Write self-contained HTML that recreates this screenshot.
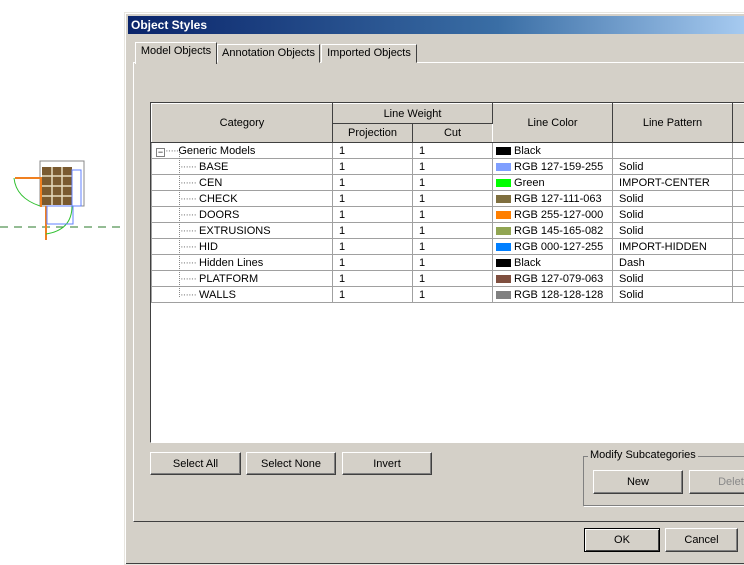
<!DOCTYPE html><html><head><style>
*{box-sizing:border-box;margin:0;padding:0}
body{width:744px;height:565px;background:#fff;position:relative;overflow:hidden;font-family:"Liberation Sans",sans-serif;font-size:11px;color:#000}
.abs{position:absolute}
.dlg{left:124px;top:12px;width:630px;height:553px;background:#d4d0c8;border:1px solid #e8e6e0;border-right:none;box-shadow:inset 1px 1px 0 #fff,inset -1px -1px 0 #404040}
.title{left:128px;top:16px;width:616px;height:18px;background:linear-gradient(90deg,#0a246a,#3a6ea5 60%,#a6caf0);color:#fff;font-weight:bold;font-size:12px;padding:1px 3px;line-height:16px}
.btn{position:absolute;background:#d4d0c8;border:1px solid;border-color:#fff #404040 #404040 #fff;box-shadow:inset -1px -1px 0 #808080;text-align:center;font-size:11px;line-height:22px}
.tab{position:absolute;top:44px;height:19px;border:1px solid;border-color:#fff #404040 transparent #fff;line-height:17px;font-size:11px;text-align:center;background:#d4d0c8}
table{border-collapse:collapse;font-size:11px}
td{border:1px solid #a0a0a0;height:16px;padding:1px 0 0 6px;line-height:14px;white-space:nowrap;overflow:hidden}
th{background:#d4d0c8;font-weight:normal;border:1px solid #808080;border-color:#fff #404040 #404040 #fff;font-size:11px}
.sw{display:inline-block;width:15px;height:8px;margin:0 3px -1px -3px}
.d{color:#888;letter-spacing:-1px}
</style></head><body>
<svg class="abs" style="left:0;top:150px" width="124" height="90">
<line x1="0" y1="77" x2="124" y2="77" stroke="#2a7a2a" stroke-dasharray="8,6"/>
<rect x="40" y="11" width="44" height="45" fill="none" stroke="#888"/>
<rect x="42" y="17" width="30" height="38" fill="#7a5a30"/>
<g stroke="#e8dcc0" stroke-width="1.5"><line x1="42" y1="26" x2="72" y2="26"/><line x1="42" y1="36" x2="72" y2="36"/><line x1="42" y1="46" x2="72" y2="46"/><line x1="52" y1="17" x2="52" y2="55"/><line x1="62" y1="17" x2="62" y2="55"/></g>
<line x1="15" y1="28" x2="42" y2="28" stroke="#f08020" stroke-width="2"/>
<line x1="41" y1="28" x2="41" y2="57" stroke="#f08020" stroke-width="2"/>
<line x1="46" y1="56" x2="46" y2="92" stroke="#f08020" stroke-width="2"/>
<path d="M14 28 Q16 48 40 56" fill="none" stroke="#30c030"/>
<path d="M72 56 Q72 80 46 84" fill="none" stroke="#30c030"/>
<rect x="47" y="56" width="26" height="18" fill="none" stroke="#6080ff"/>
<rect x="72" y="20" width="9" height="36" fill="none" stroke="#6080ff"/>
</svg>
<div class="abs dlg"></div>
<div class="abs title">Object Styles</div>
<div class="abs" style="left:133px;top:62px;width:620px;height:460px;border:1px solid;border-color:#fff #404040 #404040 #fff"></div>
<div class="tab" style="left:217px;width:103px">Annotation Objects</div>
<div class="tab" style="left:321px;width:96px">Imported Objects</div>
<div class="tab" style="left:135px;top:42px;width:82px;height:22px;z-index:2;border-bottom:none">Model Objects</div>
<div class="abs" style="left:150px;top:102px;width:600px;height:341px;background:#fff;border:1px solid;border-color:#404040 #fff #fff #404040;overflow:hidden">
<table style="width:620px;table-layout:fixed">
<colgroup><col style="width:181px"><col style="width:80px"><col style="width:80px"><col style="width:120px"><col style="width:120px"><col style="width:39px"></colgroup>
<tr style="height:20px"><th rowspan="2">Category</th><th colspan="2">Line Weight</th><th rowspan="2">Line Color</th><th rowspan="2">Line Pattern</th><th rowspan="2"></th></tr>
<tr style="height:19px"><th>Projection</th><th>Cut</th></tr>
<tr><td style="padding-left:4px"><span style="display:inline-block;width:9px;height:9px;border:1px solid #808080;font-size:9px;line-height:6px;text-align:center;vertical-align:-1px">−</span><span class="d">·····</span>Generic Models</td><td>1</td><td>1</td><td><span class="sw" style="background:#000"></span>Black</td><td></td><td></td></tr>
<tr><td style="padding-left:28px"><span class="d">······</span> BASE</td><td>1</td><td>1</td><td><span class="sw" style="background:#7f9fff"></span>RGB 127-159-255</td><td>Solid</td><td></td></tr>
<tr><td style="padding-left:28px"><span class="d">······</span> CEN</td><td>1</td><td>1</td><td><span class="sw" style="background:#00ff00"></span>Green</td><td>IMPORT-CENTER</td><td></td></tr>
<tr><td style="padding-left:28px"><span class="d">······</span> CHECK</td><td>1</td><td>1</td><td><span class="sw" style="background:#7f6f3f"></span>RGB 127-111-063</td><td>Solid</td><td></td></tr>
<tr><td style="padding-left:28px"><span class="d">······</span> DOORS</td><td>1</td><td>1</td><td><span class="sw" style="background:#ff7f00"></span>RGB 255-127-000</td><td>Solid</td><td></td></tr>
<tr><td style="padding-left:28px"><span class="d">······</span> EXTRUSIONS</td><td>1</td><td>1</td><td><span class="sw" style="background:#91a552"></span>RGB 145-165-082</td><td>Solid</td><td></td></tr>
<tr><td style="padding-left:28px"><span class="d">······</span> HID</td><td>1</td><td>1</td><td><span class="sw" style="background:#007fff"></span>RGB 000-127-255</td><td>IMPORT-HIDDEN</td><td></td></tr>
<tr><td style="padding-left:28px"><span class="d">······</span> Hidden Lines</td><td>1</td><td>1</td><td><span class="sw" style="background:#000"></span>Black</td><td>Dash</td><td></td></tr>
<tr><td style="padding-left:28px"><span class="d">······</span> PLATFORM</td><td>1</td><td>1</td><td><span class="sw" style="background:#7f4f3f"></span>RGB 127-079-063</td><td>Solid</td><td></td></tr>
<tr><td style="padding-left:28px"><span class="d">······</span> WALLS</td><td>1</td><td>1</td><td><span class="sw" style="background:#808080"></span>RGB 128-128-128</td><td>Solid</td><td></td></tr>
</table>
<div class="abs" style="left:28px;top:48px;height:146px;border-left:1px dotted #888"></div>
</div>
<div class="btn" style="left:150px;top:452px;width:91px;height:23px">Select All</div>
<div class="btn" style="left:246px;top:452px;width:90px;height:23px">Select None</div>
<div class="btn" style="left:342px;top:452px;width:90px;height:23px">Invert</div>
<div class="abs" style="left:583px;top:456px;width:170px;height:50px;border:1px solid #808080;box-shadow:1px 1px 0 #fff"></div>
<div class="abs" style="left:588px;top:449px;background:#d4d0c8;padding:0 2px;font-size:11px">Modify Subcategories</div>
<div class="btn" style="left:593px;top:470px;width:90px;height:24px">New</div>
<div class="btn" style="left:689px;top:470px;width:90px;height:24px;color:#888">Delete</div>
<div class="btn" style="left:584px;top:528px;width:76px;height:24px;border:1px solid #000;box-shadow:inset 1px 1px 0 #fff,inset -1px -1px 0 #404040">OK</div>
<div class="btn" style="left:665px;top:528px;width:73px;height:24px">Cancel</div>
</body></html>
